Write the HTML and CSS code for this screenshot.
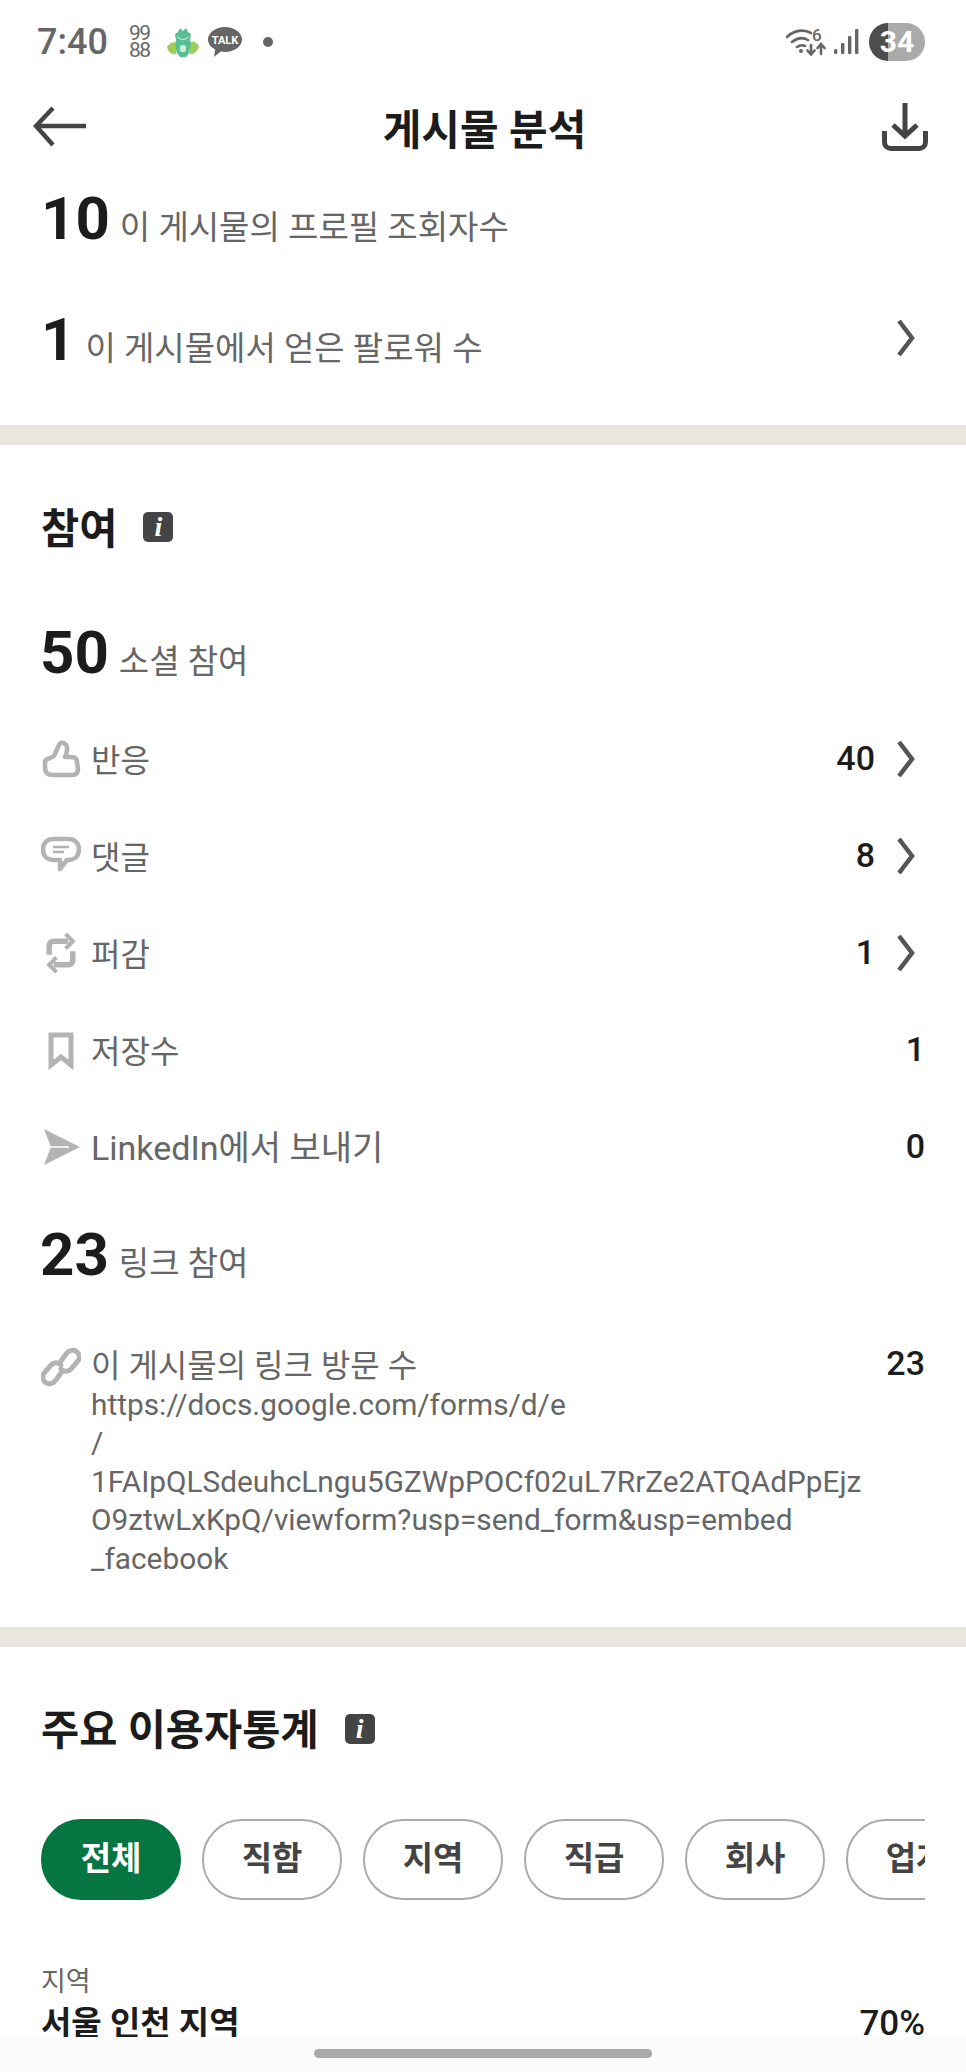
FILE: index.html
```html
<!DOCTYPE html>
<html lang="ko">

<head>
    <meta charset="UTF-8">
    <title>게시물 분석</title>
    <link rel="stylesheet" href="styles.css">
</head>

<body>
    <div class="screen">
        <div class="content">
            <div class="status-bar">
                <span class="clock">7:40</span>
                <span class="count-icon">99<br>88</span>
                <svg class="dragon" viewBox="0 0 34 34">
                    <path d="M1 22c4-6 8-6 11-2l-2 9c-4 1-8-2-9-7zM33 21c-4-6-8-5-11-2l2 10c4 1 8-3 9-8z" fill="#9ccf5a" />
                    <path d="M9 9l3-2 2-4 3 3 3-3 2 4 3 2-1 6 1 4-2 9-3 4h-6l-3-4-2-9 1-4z" fill="#59bd95" />
                    <path d="M11 11c3 4 9 4 12 0-1 5-11 5-12 0z" fill="#f4fff6" />
                    <rect x="14" y="20" width="6" height="7" rx="2" fill="#c9f0d8" />
                </svg>
                <svg class="talk" viewBox="0 0 34 30">
                    <path d="M17 0c9.400 0 17 5.600 17 12.500S26.400 25 17 25c-1.500 0-3-.1-4.300-.4L6 30l1.200-7.500C2.800 20.200 0 16.600 0 12.500 0 5.600 7.600 0 17 0z" fill="#666" />
                    <text x="17" y="17" text-anchor="middle" class="talk-text">TALK</text>
                </svg>
                <span class="status-dot"></span>
                <svg class="wifi" viewBox="0 0 40 28">
                    <g fill="none" stroke="#666" stroke-width="2.600" stroke-linecap="round">
                        <path d="M1 9c7-7 17-8 24-4M6 14c5-4 11-5 16-2M11 19c3-2 6-2 8-1" />
                        <path d="M25 26V17M21.500 22.500l3.500 4 3.500-4M35 26v-9M31.500 20l3.500-4 3.500 4" />
                    </g>
                    <circle cx="15" cy="23" r="2" fill="#666" />
                    <text x="26" y="13" class="wifi-six">6</text>
                </svg>
                <svg class="signal" viewBox="0 0 25 26">
                    <g fill="#666">
                        <rect x="0" y="20" width="3.400" height="5" rx="1.500" />
                        <rect x="7" y="14" width="3.400" height="11" rx="1" />
                        <rect x="14" y="7" width="3.400" height="18" rx="1" />
                        <rect x="21" y="0" width="3.400" height="25" rx="1" />
                    </g>
                </svg>
                <span class="battery">34</span>
            </div>

            <div class="top-bar">
                <svg class="back" viewBox="0 0 54 42">
                    <path d="M53 20H4M20 2L3 20l17 19" fill="none" stroke="#444" stroke-width="4.500" />
                </svg>
                <h1>게시물 분석</h1>
                <svg class="save" viewBox="0 0 46 48">
                    <path d="M23 0v32M11 22l12 11 12-11M2.500 28v11c0 4 3 6.500 6.500 6.500h28c3.500 0 6.500-2.500 6.500-6.500V28" fill="none" stroke="#444" stroke-width="5" />
                </svg>
            </div>

            <section class="first-block">
                <div class="stat">
                    <span class="stat-num">10</span>
                    <span class="stat-label">이 게시물의 프로필 조회자수</span>
                </div>
                <div class="stat stat-link">
                    <span class="stat-num">1</span>
                    <span class="stat-label">이 게시물에서 얻은 팔로워 수</span>
                    <svg class="chevron chevron-end" viewBox="0 0 20 36"><path d="M3 1l13 17L3 35" /></svg>
                </div>
            </section>

            <div class="divider"></div>

            <section class="block">
                <div class="block-title">
                    <h2>참여</h2>
                    <span class="info">i</span>
                </div>

                <div class="stat stat-social">
                    <span class="stat-num">50</span>
                    <span class="stat-label">소셜 참여</span>
                </div>

                <div class="rows">
                    <div class="row">
                        <svg class="row-icon" viewBox="0 0 40 40">
                            <path d="M4 22c2-3 7-3 9-5l5-11c1-3 5-3 7 0 2 2 1 8-1 12h7c3 0 5 2 5 5l1 7c0 4-2 6-6 6H12c-5 0-8-2-8-7z" fill="none" stroke="#b3b3b3" stroke-width="4.500" stroke-linejoin="round" />
                        </svg>
                        <span class="row-label">반응</span>
                        <span class="row-value">40</span>
                        <svg class="chevron" viewBox="0 0 20 36"><path d="M3 1l13 17L3 35" /></svg>
                    </div>
                    <div class="row">
                        <svg class="row-icon" viewBox="0 0 40 40">
                            <path d="M13 3h14c7 0 11 4 11 10.500S34 24 27 24h-1l-7 9v-9h-6C6 24 2 20 2 13.500S6 3 13 3z" fill="none" stroke="#b3b3b3" stroke-width="4.500" stroke-linejoin="round" />
                            <path d="M12 11h16M12 16h11" stroke="#b3b3b3" stroke-width="2.500" />
                        </svg>
                        <span class="row-label">댓글</span>
                        <span class="row-value">8</span>
                        <svg class="chevron" viewBox="0 0 20 36"><path d="M3 1l13 17L3 35" /></svg>
                    </div>
                    <div class="row">
                        <svg class="row-icon" viewBox="0 0 40 44">
                            <path d="M7 24V14c0-3 2-5 5-5h16M33 20v10c0 3-2 5-5 5H12" fill="none" stroke="#b3b3b3" stroke-width="6" />
                            <path d="M25 1l8 8-8 8M15 27l-8 8 8 8" fill="none" stroke="#b3b3b3" stroke-width="4.500" />
                        </svg>
                        <span class="row-label">퍼감</span>
                        <span class="row-value">1</span>
                        <svg class="chevron" viewBox="0 0 20 36"><path d="M3 1l13 17L3 35" /></svg>
                    </div>
                    <div class="row">
                        <svg class="row-icon" viewBox="0 0 40 40">
                            <path d="M10 5h20v30l-10-8-10 8z" fill="none" stroke="#b3b3b3" stroke-width="5" />
                        </svg>
                        <span class="row-label">저장수</span>
                        <span class="row-value">1</span>
                    </div>
                    <div class="row">
                        <svg class="row-icon" viewBox="0 0 40 40">
                            <path d="M3 2l36 18L3 38l7-18z" fill="#b3b3b3" />
                            <path d="M10 20h18" stroke="#fff" stroke-width="1.500" />
                        </svg>
                        <span class="row-label row-label-wide">LinkedIn에서 보내기</span>
                        <span class="row-value">0</span>
                    </div>
                </div>

                <div class="stat stat-links">
                    <span class="stat-num">23</span>
                    <span class="stat-label">링크 참여</span>
                </div>

                <div class="link-row">
                    <svg class="row-icon" viewBox="0 0 40 40">
                        <g fill="none" stroke="#b3b3b3" stroke-width="5" stroke-linecap="round">
                            <path d="M20 14l5-7c3-4 8-5 11-2s3 7 0 10l-6 7c-3 3-7 3-10 0" />
                            <path d="M20 26l-5 7c-3 4-8 5-11 2s-3-7 0-10l6-7c3-3 7-3 10 0" />
                        </g>
                    </svg>
                    <div class="link-text">
                        <div class="link-title">이 게시물의 링크 방문 수</div>
                        <div class="link-url">https://docs.google.com/forms/d/e<br>/<br>1FAIpQLSdeuhcLngu5GZWpPOCf02uL7RrZe2ATQAdPpEjz<br>O9ztwLxKpQ/viewform?usp=send_form&amp;usp=embed<br>_facebook</div>
                    </div>
                    <span class="row-value link-value">23</span>
                </div>
            </section>

            <div class="divider"></div>

            <section class="block">
                <div class="block-title">
                    <h2>주요 이용자통계</h2>
                    <span class="info">i</span>
                </div>

                <div class="pills">
                    <span class="pill pill-active">전체</span>
                    <span class="pill">직함</span>
                    <span class="pill">지역</span>
                    <span class="pill">직급</span>
                    <span class="pill">회사</span>
                    <span class="pill">업계</span>
                </div>

                <div class="demo-type">지역</div>
                <div class="demo-row">
                    <span>서울 인천 지역</span>
                    <span class="demo-value">70%</span>
                </div>
            </section>
        </div>

        <div class="nav-bar">
            <span class="nav-handle"></span>
        </div>
    </div>
</body>

</html>
```

FILE: styles.css
```css
* {
    box-sizing: border-box;
}

body {
    margin: 0;
    padding: 0;
    background-color: #ffffff;
    font-family: Roboto, "Noto Sans CJK KR", sans-serif;
    color: #1c1c1c;
}

.screen {
    height: 2072px;
    display: flex;
    flex-direction: column;
    overflow: hidden;
}

.content {
    flex: 1;
    min-height: 0;
    overflow: hidden;
}

/* status bar */
.status-bar {
    height: 84px;
    padding: 0 41px 0 37px;
    display: flex;
    align-items: center;
    color: #666666;
}

.clock {
    font-size: 36px;
    font-weight: 500;
    width: 92px;
}

.count-icon {
    width: 37px;
    font-size: 21px;
    line-height: 17px;
    letter-spacing: -1.500px;
}

.dragon {
    width: 34px;
    height: 34px;
    margin-right: 8px;
}

.talk {
    width: 34px;
    height: 30px;
    margin-right: 21px;
}

.talk-text {
    font-size: 11px;
    font-weight: 700;
    fill: #ffffff;
}

.status-dot {
    width: 10px;
    height: 10px;
    border-radius: 50%;
    background-color: #666666;
    margin-right: auto;
}

.wifi {
    width: 40px;
    height: 28px;
    margin-right: 8px;
}

.wifi-six {
    font-size: 17px;
    font-weight: 500;
    fill: #666666;
}

.signal {
    width: 25px;
    height: 26px;
    margin-right: 10px;
}

.battery {
    width: 56px;
    height: 38px;
    border-radius: 19px;
    background: linear-gradient(to right, #4d4d4d 34%, #aaaaaa 34%);
    color: #ffffff;
    font-size: 30px;
    font-weight: 700;
    line-height: 38px;
    text-align: center;
}

/* top bar */
.top-bar {
    height: 86px;
    padding: 0 38px 0 33px;
    display: flex;
    align-items: center;
    justify-content: space-between;
}

.back {
    width: 54px;
    height: 42px;
}

.save {
    width: 46px;
    height: 48px;
}

h1 {
    margin: 0 0 2px;
    font-size: 42px;
    font-weight: 700;
    color: #1c1c1c;
}

/* stats */
.first-block {
    padding: 14px 41px 50px;
}

.stat {
    height: 70px;
    display: flex;
    align-items: baseline;
    gap: 10px;
}

.stat-link {
    margin-top: 51px;
}

.stat-num {
    font-size: 60px;
    font-weight: 700;
    line-height: 70px;
}

.stat-label {
    font-size: 33px;
    color: #666666;
}

.chevron {
    width: 20px;
    height: 36px;
    flex-shrink: 0;
    margin-left: 21px;
    margin-right: 9px;
}

.chevron path {
    fill: none;
    stroke: #555555;
    stroke-width: 4.500;
}

.chevron-end {
    align-self: center;
    margin-left: auto;
    margin-top: -4px;
}

.divider {
    height: 20px;
    background-color: #e8e6df;
}

.block {
    padding: 57px 41px 48px;
}

.block-title {
    height: 50px;
    display: flex;
    align-items: center;
    gap: 26px;
}

h2 {
    margin: 0 0 3px;
    font-size: 41.500px;
    font-weight: 700;
    color: #1c1c1c;
}

.info {
    width: 30px;
    height: 30px;
    border-radius: 5px;
    background-color: #444444;
    color: #ffffff;
    font-family: "Liberation Serif", serif;
    font-size: 28px;
    font-style: italic;
    font-weight: 700;
    line-height: 30px;
    text-align: center;
}

.stat-social {
    margin-top: 66px;
    margin-left: -1px;
}

.stat-links {
    margin-top: 25px;
    margin-left: -1px;
}

/* rows */
.rows {
    margin-top: 22px;
}

.row {
    height: 97px;
    display: flex;
    align-items: center;
}

.row-icon {
    width: 40px;
    height: 40px;
    flex-shrink: 0;
    margin-right: 10px;
}

.row-label {
    font-size: 32px;
    color: #666666;
    margin-right: auto;
    margin-bottom: 2px;
}

.row-label-wide {
    font-size: 34px;
}

.row-value {
    font-size: 34px;
    font-weight: 500;
    color: #1c1c1c;
    margin-bottom: 2px;
}

.link-row {
    margin-top: 57px;
    display: flex;
    align-items: flex-start;
}

.link-value {
    margin-top: -4px;
}

.link-text {
    margin-right: auto;
    color: #666666;
    font-size: 29.800px;
    line-height: 38.600px;
}

.link-title {
    font-size: 32px;
}

/* demographics */
.pills {
    margin-top: 65px;
    display: flex;
    gap: 21px;
    overflow: hidden;
}

.pill {
    flex: 0 0 140px;
    height: 81px;
    border: 2px solid #aaaaaa;
    border-radius: 40px;
    color: #444444;
    font-size: 33px;
    font-weight: 700;
    line-height: 75px;
    text-align: center;
}

.pill-active {
    border-color: #057642;
    background-color: #057642;
    color: #ffffff;
}

.demo-type {
    margin-top: 64px;
    font-size: 27px;
    line-height: 36px;
    color: #666666;
}

.demo-row {
    display: flex;
    justify-content: space-between;
    align-items: baseline;
    font-size: 33px;
    font-weight: 700;
    line-height: 44px;
    margin-top: 2px;
}

.demo-value {
    font-size: 35px;
    font-weight: 500;
}

.nav-bar {
    height: 35px;
    flex-shrink: 0;
    background-color: #fbfbfb;
    display: flex;
    justify-content: center;
    padding-top: 12px;
}

.nav-handle {
    width: 338px;
    height: 9px;
    border-radius: 5px;
    background-color: #aaaaaa;
}
```
